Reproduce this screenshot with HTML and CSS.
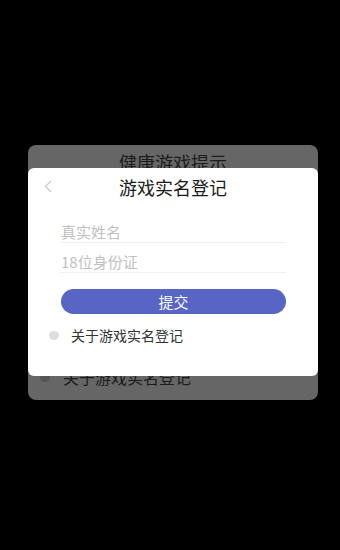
FILE: index.html
```html
<!DOCTYPE html>
<html lang="zh-CN">
<head>
<meta charset="UTF-8">
<meta name="viewport" content="width=device-width, initial-scale=1.0">
<title>游戏实名登记</title>
<link rel="stylesheet" href="styles.css">
</head>
<body>

<div class="dialog-back">
  <!-- Dialog underneath -->
  <div class="back-title">健康游戏提示</div>
  <div class="back-about"><span class="dot dot-dark"></span>关于游戏实名登记</div>

  <div class="dialog">
    <div class="dialog-header">
      <span class="back-arrow">
        <svg width="8" height="13" viewBox="0 0 8 13"><path d="M7 1 L1.5 6.5 L7 12" fill="none" stroke="#c8c8c8" stroke-width="1.2"/></svg>
      </span>
      <h3>游戏实名登记</h3>
    </div>
    <div class="fields">
      <div class="field">真实姓名</div>
      <div class="field">18位身份证</div>
    </div>
    <div class="submit">提交</div>
    <div class="about"><span class="dot"></span>关于游戏实名登记</div>
  </div>
</div>

</body>
</html>
```

FILE: styles.css
```css
body, html {
  margin: 0;
  height: 100%;
  background-color: #000;
  font-family: "Noto Sans CJK SC", "Noto Sans", sans-serif;
}
.dialog-back {
  position: relative;
  margin: 145px 0 0 28px;
  width: 290px;
  height: 255px;
  background-color: #666;
  border-radius: 8px;
  box-sizing: border-box;
}
.back-title {
  padding-top: 5px;
  text-align: center;
  font-size: 18px;
  line-height: 24px;
  color: #1c1c1c;
}
.back-about {
  display: flex;
  align-items: center;
  margin-top: 191px;
  padding-left: 12px;
  font-size: 16px;
  line-height: 24px;
  color: #1c1c1c;
}
.dot {
  display: inline-block;
  width: 10px;
  height: 9px;
  border-radius: 50%;
  background-color: #dedede;
  margin-right: 12px;
}
.dot-dark {
  background-color: #555;
  margin-right: 13px;
}
/* Front dialog covers the one below */
.dialog {
  position: absolute;
  top: 23px;
  left: 0;
  right: 0;
  height: 208px;
  background-color: #fff;
  border-radius: 6px;
}
.dialog-header {
  position: relative;
  height: 38px;
}
.dialog-header h3 {
  margin: 0;
  text-align: center;
  font-size: 18px;
  font-weight: normal;
  line-height: 38px;
  color: #1a1a1a;
}
.back-arrow {
  position: absolute;
  left: 16px;
  top: 6px;
}
.fields {
  margin: 7px 32px 0 33px;
}
.field {
  padding-top: 8px;
  height: 21px;
  line-height: 22px;
  font-size: 15px;
  color: #c0c0c0;
  border-bottom: 1px solid #f0f0f0;
}
.submit {
  margin: 16px 32px 0 33px;
  height: 25px;
  line-height: 25px;
  border-radius: 13px;
  background-color: #5865c4;
  color: #fff;
  text-align: center;
  font-size: 15px;
}
.about {
  display: flex;
  align-items: center;
  margin-top: 10px;
  padding-left: 21px;
  font-size: 14px;
  line-height: 22px;
  color: #333;
}
```
